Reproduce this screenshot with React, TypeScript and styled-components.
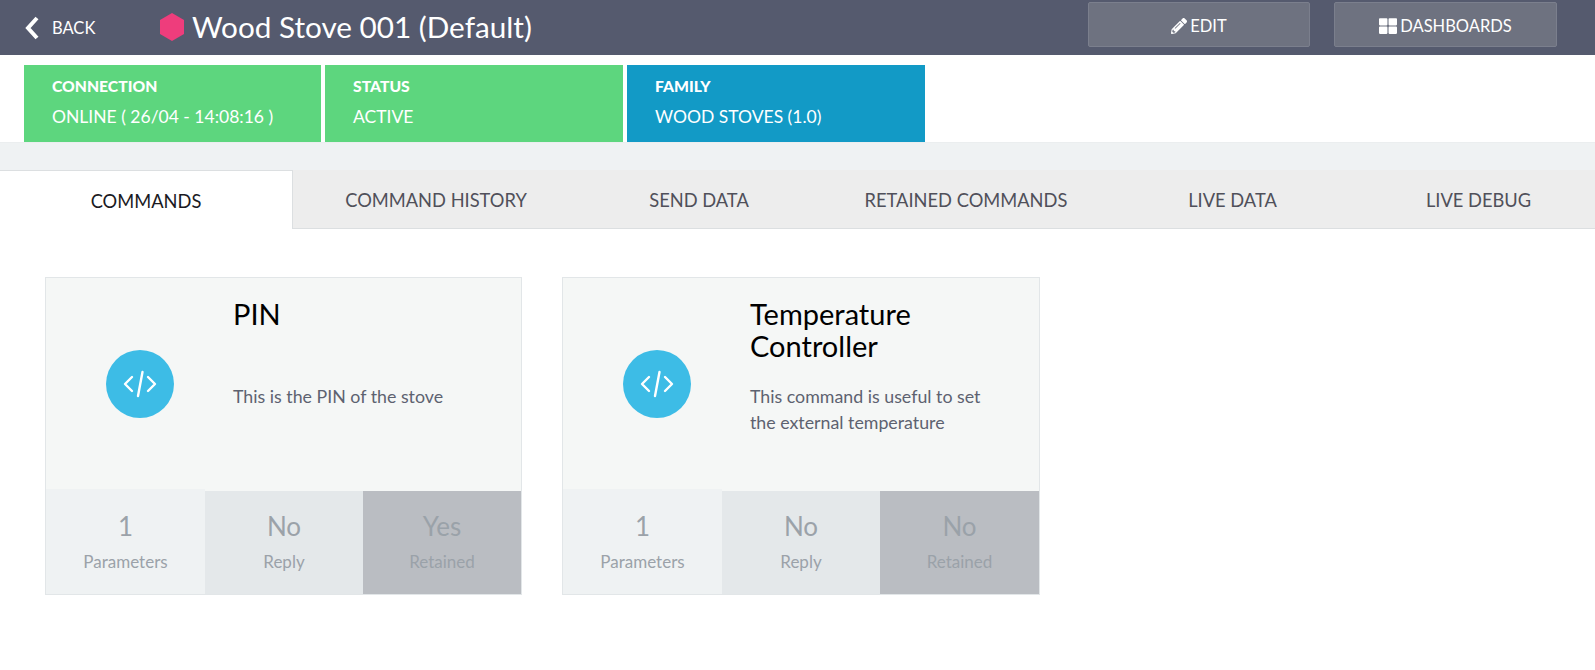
import React from "react";
import styled, { createGlobalStyle } from "styled-components";
import { FaPencilAlt, FaThLarge } from "react-icons/fa";

const Global = createGlobalStyle`
  html, body {
    margin: 0;
    padding: 0;
    background: #fff;
    font-family: Lato, "Noto Sans", sans-serif;
  }
  * { box-sizing: border-box; }
`;

const Page = styled.div`
  width: 1595px;
  height: 670px;
  overflow: hidden;
`;

const Header = styled.header`
  display: flex;
  align-items: center;
  height: 55px;
  background: #555a6e;
  color: #fff;
`;

const Back = styled.div`
  display: flex;
  align-items: center;
  width: 160px;
  padding-left: 25px;
  font-size: 16.5px;
  gap: 13px;
`;

const Title = styled.h1`
  display: flex;
  align-items: center;
  gap: 8px;
  flex: 1;
  margin: 0;
  padding-bottom: 2px;
  font-size: 29.7px;
  font-weight: 400;
`;

const HeadButton = styled.button<{ $w: number }>`
  display: flex;
  align-items: center;
  justify-content: center;
  gap: 3px;
  width: ${(p) => p.$w}px;
  height: 45px;
  margin: 0 24px 6px 0;
  border: 1px solid #7b7f8d;
  border-radius: 2px;
  background: #6e7280;
  color: #fff;
  font-family: inherit;
  font-size: 16.5px;
  padding: 2px 0 0;
`;

const LastGap = styled.div`
  width: 14px;
`;

const StatusRow = styled.div`
  display: grid;
  grid-template-columns: 297px 298px 298px;
  gap: 4px;
  height: 87px;
  padding: 10px 0 0 24px;
`;

const StatusCard = styled.div<{ $bg: string }>`
  padding: 11px 0 0 28px;
  background: ${(p) => p.$bg};
  color: #fff;
`;

const StatusLabel = styled.div`
  height: 30px;
  font-size: 15.7px;
  font-weight: 900;
  line-height: 20px;
`;

const StatusValue = styled.div`
  font-size: 17.5px;
  line-height: 21px;
`;

const Band = styled.div`
  height: 28px;
  background: #eff2f3;
  border-top: 1px solid #ebeeef;
`;

const Tabs = styled.nav`
  display: grid;
  grid-template-columns: 293px 286px 240px 294px 239px 253px;
  height: 59px;
`;

const Tab = styled.div<{ $active?: boolean }>`
  display: flex;
  align-items: center;
  justify-content: center;
  padding-top: 2px;
  font-size: 18.3px;
  color: ${(p) => (p.$active ? "#1a1a22" : "#50505a")};
  background: ${(p) => (p.$active ? "#fff" : "#ededed")};
  border-bottom: ${(p) => (p.$active ? "none" : "1px solid #dcdfe1")};
  border-top: ${(p) => (p.$active ? "1px solid #dcdfe1" : "none")};
  border-right: ${(p) => (p.$active ? "1px solid #dcdfe1" : "none")};
`;

const Cards = styled.main`
  display: grid;
  grid-template-columns: 477px 478px;
  gap: 40px;
  padding: 48px 0 0 45px;
`;

const Card = styled.section`
  display: flex;
  flex-direction: column;
  height: 318px;
  border: 1px solid #e2e6e8;
  background: #f5f7f6;
`;

const CardBody = styled.div`
  display: grid;
  grid-template-columns: 187px 1fr;
  height: 211px;
`;

const IconCol = styled.div`
  display: flex;
  justify-content: center;
  padding: 72px 0 0 0;
`;

const Circle = styled.div`
  display: flex;
  align-items: center;
  justify-content: center;
  width: 68px;
  height: 68px;
  border-radius: 50%;
  background: #3dbce6;
`;

const CardText = styled.div`
  display: flex;
  flex-direction: column;
  padding: 20px 30px 0 0;
`;

const CardTitle = styled.h2`
  height: 85px;
  margin: 0;
  font-size: 29px;
  font-weight: 400;
  line-height: 32px;
  color: #000;
`;

const CardDesc = styled.p`
  margin: 0;
  font-size: 17.8px;
  line-height: 26px;
  color: #5d6270;
`;

const Stats = styled.div`
  display: grid;
  grid-template-columns: 159px 158px 1fr;
  height: 105px;
  align-items: end;
`;

const Stat = styled.div<{ $bg: string; $h: number; $fg: string }>`
  display: flex;
  flex-direction: column;
  align-items: center;
  height: ${(p) => p.$h}px;
  padding-bottom: 20px;
  justify-content: flex-end;
  background: ${(p) => p.$bg};
  color: ${(p) => p.$fg};
`;

const StatValue = styled.div`
  font-size: 26px;
  line-height: 32px;
  margin-bottom: 8px;
`;

const StatLabel = styled.div`
  font-size: 17px;
  line-height: 24px;
`;

function CodeIcon() {
  return (
    <svg width="34" height="28" viewBox="0 0 34 28" fill="none" stroke="#fff" strokeWidth="2.4" strokeLinecap="round" strokeLinejoin="round">
      <path d="M9 7 L2 14 L9 21" />
      <path d="M25 7 L32 14 L25 21" />
      <path d="M19.5 2 L15 26" />
    </svg>
  );
}

function Chevron() {
  return (
    <svg width="14" height="24" viewBox="0 0 14 24" fill="none" stroke="#fff" strokeWidth="4" strokeLinejoin="miter">
      <path d="M12 2 L3 12 L12 22" />
    </svg>
  );
}

function Hexagon() {
  return (
    <svg width="24" height="28" viewBox="0 0 24 28">
      <polygon points="12,0 24,7 24,21 12,28 0,21 0,7" fill="#ee3d7c" />
    </svg>
  );
}

interface Command {
  title: string;
  desc: string;
  params: string;
  reply: string;
  retained: string;
}

const commands: Command[] = [
  { title: "PIN", desc: "This is the PIN of the stove", params: "1", reply: "No", retained: "Yes" },
  {
    title: "Temperature Controller",
    desc: "This command is useful to set the external temperature",
    params: "1",
    reply: "No",
    retained: "No",
  },
];

const tabs = ["COMMANDS", "COMMAND HISTORY", "SEND DATA", "RETAINED COMMANDS", "LIVE DATA", "LIVE DEBUG"];

export default function App() {
  return (
    <Page>
      <Global />
      <Header>
        <Back>
          <Chevron />
          BACK
        </Back>
        <Title>
          <Hexagon />
          Wood Stove 001 (Default)
        </Title>
        <HeadButton $w={222}>
          <FaPencilAlt size={16} />
          EDIT
        </HeadButton>
        <HeadButton $w={223}>
          <FaThLarge size={18} />
          DASHBOARDS
        </HeadButton>
        <LastGap />
      </Header>
      <StatusRow>
        <StatusCard $bg="#5dd67e">
          <StatusLabel>CONNECTION</StatusLabel>
          <StatusValue>ONLINE ( 26/04 - 14:08:16 )</StatusValue>
        </StatusCard>
        <StatusCard $bg="#5dd67e">
          <StatusLabel>STATUS</StatusLabel>
          <StatusValue>ACTIVE</StatusValue>
        </StatusCard>
        <StatusCard $bg="#129ac6">
          <StatusLabel>FAMILY</StatusLabel>
          <StatusValue>WOOD STOVES (1.0)</StatusValue>
        </StatusCard>
      </StatusRow>
      <Band />
      <Tabs>
        {tabs.map((t, i) => (
          <Tab key={t} $active={i === 0}>
            {t}
          </Tab>
        ))}
      </Tabs>
      <Cards>
        {commands.map((c) => (
          <Card key={c.title}>
            <CardBody>
              <IconCol>
                <Circle>
                  <CodeIcon />
                </Circle>
              </IconCol>
              <CardText>
                <CardTitle>{c.title}</CardTitle>
                <CardDesc>{c.desc}</CardDesc>
              </CardText>
            </CardBody>
            <Stats>
              <Stat $bg="#eff2f3" $h={105} $fg="#9ba2a9">
                <StatValue>{c.params}</StatValue>
                <StatLabel>Parameters</StatLabel>
              </Stat>
              <Stat $bg="#e4e8ea" $h={103} $fg="#9ba2a9">
                <StatValue>{c.reply}</StatValue>
                <StatLabel>Reply</StatLabel>
              </Stat>
              <Stat $bg="#babdc2" $h={103} $fg="#9aa2a9">
                <StatValue>{c.retained}</StatValue>
                <StatLabel>Retained</StatLabel>
              </Stat>
            </Stats>
          </Card>
        ))}
      </Cards>
    </Page>
  );
}
